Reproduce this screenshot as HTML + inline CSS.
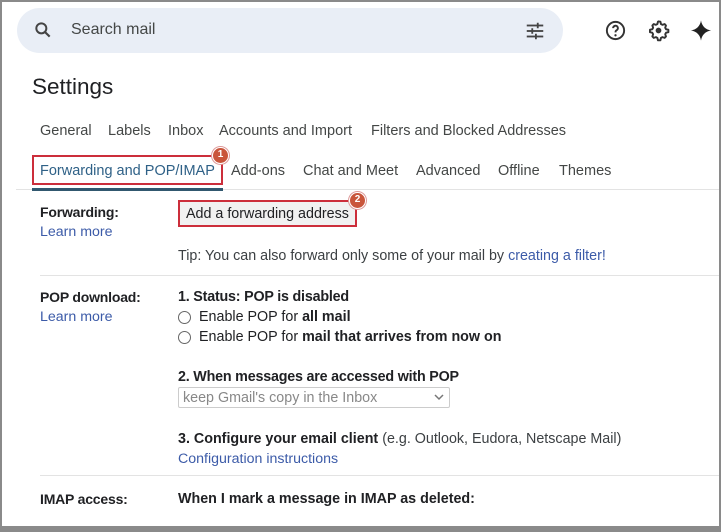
<!DOCTYPE html>
<html><head><style>
*{margin:0;padding:0;box-sizing:border-box}
body{width:721px;height:532px;overflow:hidden;background:#fff;font-family:"Liberation Sans",Arial,sans-serif;color:#202124;position:relative}
.frame{position:absolute;inset:0;border:2px solid #8a8a8a;border-bottom:6px solid #8a8a8a;pointer-events:none;z-index:10}
.a{position:absolute;white-space:nowrap}
.search{left:17px;top:8px;width:546px;height:45px;border-radius:23px;background:#e9eef6}
.tab{font-size:14.5px;color:#444746}
.lbl{font-size:14px;color:#202124;font-weight:bold;letter-spacing:-0.2px}
.link{color:#3c5ba8;font-size:14.2px}
.txt{font-size:14.3px;color:#202124}
.badge{width:17px;height:17px;border-radius:50%;background:#c9553b;border:1.5px solid #fff;box-shadow:0 0 0 1px #d99;color:#fff;font-size:10px;font-weight:bold;text-align:center;line-height:14px}
.radio{width:13px;height:13px;border:1px solid #666;border-radius:50%}
</style></head><body>
<div class="frame"></div>
<div class="a search"></div>
<svg class="a" style="left:33px;top:20px" width="20" height="20" viewBox="0 0 24 24"><circle cx="10" cy="10" r="6" fill="none" stroke="#444" stroke-width="2.4"/><path d="M14.5 14.5L20 20" stroke="#444" stroke-width="2.6"/></svg>
<div class="a" style="left:71px;top:21px;font-size:16px;color:#444746">Search mail</div>
<svg class="a" style="left:524px;top:20px" width="22" height="22" viewBox="0 0 24 24" fill="#444"><rect x="3" y="5" width="18" height="2"/><rect x="3" y="11" width="18" height="2"/><rect x="3" y="17" width="18" height="2"/><rect x="14" y="3" width="2" height="6"/><rect x="8" y="9" width="2" height="6"/><rect x="12" y="15" width="2" height="6"/></svg>
<svg class="a" style="left:604px;top:19px" width="23" height="23" viewBox="0 0 24 24"><circle cx="12" cy="12" r="9" fill="none" stroke="#333" stroke-width="2"/><path d="M9.5 9.5a2.5 2.5 0 1 1 3.5 2.3c-.7.4-1 .9-1 1.7v.5" fill="none" stroke="#333" stroke-width="2"/><circle cx="12" cy="17" r="1.2" fill="#333"/></svg>
<svg class="a" style="left:647px;top:19px" width="23" height="23" viewBox="0 0 24 24"><path d="M12 2.5l2 .3.5 2.4 1.6.9 2.3-.8 1.4 1.5-.8 2.3.9 1.6 2.4.5v2.6l-2.4.5-.9 1.6.8 2.3-1.4 1.5-2.3-.8-1.6.9-.5 2.4h-2.6l-.5-2.4-1.6-.9-2.3.8-1.4-1.5.8-2.3-.9-1.6-2.4-.5v-2.6l2.4-.5.9-1.6-.8-2.3 1.4-1.5 2.3.8 1.6-.9.5-2.4z" fill="none" stroke="#333" stroke-width="2" stroke-linejoin="round"/><circle cx="12" cy="12" r="3" fill="#333"/></svg>
<svg class="a" style="left:690px;top:19px" width="22" height="23" viewBox="0 0 24 24"><path d="M12 1C12.8 7 17 11.2 23 12 17 12.8 12.8 17 12 23 11.2 17 7 12.8 1 12 7 11.2 11.2 7 12 1z" fill="#222"/></svg>
<div class="a" style="left:32px;top:74px;font-size:22.5px;color:#202124">Settings</div>
<div class="a tab" style="left:40px;top:123px">General</div>
<div class="a tab" style="left:108px;top:123px">Labels</div>
<div class="a tab" style="left:168px;top:123px">Inbox</div>
<div class="a tab" style="left:219px;top:123px">Accounts and Import</div>
<div class="a tab" style="left:371px;top:123px">Filters and Blocked Addresses</div>
<div class="a tab" style="left:40px;top:163px;color:#2f6187">Forwarding and POP/IMAP</div>
<div class="a tab" style="left:231px;top:163px">Add-ons</div>
<div class="a tab" style="left:303px;top:163px">Chat and Meet</div>
<div class="a tab" style="left:416px;top:163px">Advanced</div>
<div class="a tab" style="left:498px;top:163px">Offline</div>
<div class="a tab" style="left:559px;top:163px">Themes</div>
<div class="a" style="left:32px;top:155px;width:191px;height:30px;border:2px solid #cc2e3b"></div>
<div class="a badge" style="left:212px;top:147px">1</div>
<div class="a" style="left:16px;top:189px;width:705px;height:1px;background:#e3e3e3"></div>
<div class="a" style="left:32px;top:188px;width:191px;height:3px;background:#31586f"></div>
<div class="a lbl" style="left:40px;top:204px">Forwarding:</div>
<div class="a link" style="left:40px;top:224px">Learn more</div>
<div class="a" style="left:178px;top:200px;width:179px;height:27px;border:2px solid #cc2e3b;background:#f1f1f1"></div>
<div class="a txt" style="left:186px;top:206px">Add a forwarding address</div>
<div class="a badge" style="left:349px;top:192px">2</div>
<div class="a txt" style="left:178px;top:248px;color:#3c4043">Tip: You can also forward only some of your mail by <span style="color:#3c5ba8">creating a filter!</span></div>
<div class="a" style="left:40px;top:275px;width:681px;height:1px;background:#e3e3e3"></div>
<div class="a lbl" style="left:40px;top:289px">POP download:</div>
<div class="a link" style="left:40px;top:309px">Learn more</div>
<div class="a txt" style="left:178px;top:289px;font-weight:bold;letter-spacing:-0.2px">1. Status: POP is disabled</div>
<div class="a radio" style="left:178px;top:311px"></div>
<div class="a txt" style="left:199px;top:309px">Enable POP for <b>all mail</b></div>
<div class="a radio" style="left:178px;top:331px"></div>
<div class="a txt" style="left:199px;top:329px">Enable POP for <b>mail that arrives from now on</b></div>
<div class="a txt" style="left:178px;top:369px;font-weight:bold;letter-spacing:-0.2px">2. When messages are accessed with POP</div>
<div class="a" style="left:178px;top:387px;width:272px;height:21px;border:1px solid #ccc;border-radius:2px"></div>
<div class="a txt" style="left:183px;top:390px;color:#888">keep Gmail's copy in the Inbox</div>
<svg class="a" style="left:434px;top:393px" width="10" height="8" viewBox="0 0 10 8"><path d="M1 2l4 4 4-4" fill="none" stroke="#777" stroke-width="1.5"/></svg>
<div class="a txt" style="left:178px;top:431px"><b>3. Configure your email client</b> <span style="color:#3c4043">(e.g. Outlook, Eudora, Netscape Mail)</span></div>
<div class="a link" style="left:178px;top:451px">Configuration instructions</div>
<div class="a" style="left:40px;top:475px;width:681px;height:1px;background:#e3e3e3"></div>
<div class="a lbl" style="left:40px;top:491px">IMAP access:</div>
<div class="a txt" style="left:178px;top:491px"><b>When I mark a message in IMAP as deleted:</b></div>
</body></html>
